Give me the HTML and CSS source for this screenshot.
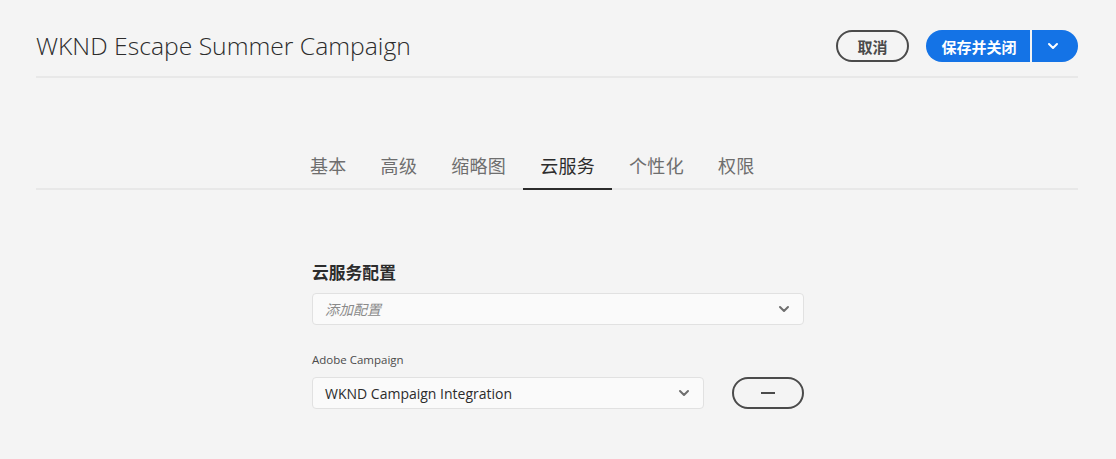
FILE: index.html
```html
<!DOCTYPE html>
<html lang="zh">
<head>
<meta charset="utf-8">
<title>WKND Escape Summer Campaign</title>
<link rel="stylesheet" href="styles.css">
</head>
<body>
<div class="page">
  <header class="header">
    <h1 class="title">WKND Escape Summer Campaign</h1>
    <div class="actions">
      <button class="btn-cancel">取消</button>
      <div class="split">
        <button class="btn-save">保存并关闭</button>
        <button class="btn-more" aria-label="更多">
          <svg width="12" height="8" viewBox="0 0 12 8"><path d="M2 2 L6 6 L10 2" fill="none" stroke="#fff" stroke-width="2" stroke-linecap="round" stroke-linejoin="round"/></svg>
        </button>
      </div>
    </div>
  </header>

  <nav class="tabs">
    <div class="tab">基本</div>
    <div class="tab">高级</div>
    <div class="tab">缩略图</div>
    <div class="tab active">云服务</div>
    <div class="tab">个性化</div>
    <div class="tab">权限</div>
  </nav>

  <section class="form">
    <h2 class="section-title">云服务配置</h2>
    <div class="select placeholder">
      <span>添加配置</span>
      <svg class="chev" width="12" height="8" viewBox="0 0 12 8"><path d="M2 2 L6 6 L10 2" fill="none" stroke="#6e6e6e" stroke-width="2" stroke-linecap="round" stroke-linejoin="round"/></svg>
    </div>
    <div class="field-label">Adobe Campaign</div>
    <div class="row">
      <div class="select short">
        <span>WKND Campaign Integration</span>
        <svg class="chev" width="12" height="8" viewBox="0 0 12 8"><path d="M2 2 L6 6 L10 2" fill="none" stroke="#6e6e6e" stroke-width="2" stroke-linecap="round" stroke-linejoin="round"/></svg>
      </div>
      <button class="btn-remove" aria-label="删除">
        <svg width="14" height="2" viewBox="0 0 14 2"><rect width="14" height="2" fill="#4b4b4b"/></svg>
      </button>
    </div>
  </section>
</div>
</body>
</html>
```

FILE: styles.css
```css
* { box-sizing: border-box; }
html, body { margin: 0; padding: 0; }
body {
  background: #f4f4f4;
  font-family: "Open Sans", "Noto Sans CJK SC", sans-serif;
  color: #2c2c2c;
}
.page {
  padding: 0 38px 0 36px;
}
.header {
  display: flex;
  align-items: center;
  justify-content: space-between;
  padding: 30px 0 14px;
  border-bottom: 2px solid #e8e8e8;
}
.title {
  margin: 0;
  font-weight: 300;
  font-size: 24.7px;
  line-height: 32px;
  color: #2c2c2c;
}
.actions {
  display: flex;
  gap: 17px;
}
button {
  font-family: "Noto Sans CJK SC", sans-serif;
  cursor: pointer;
}
.btn-cancel {
  width: 73px;
  height: 32px;
  border: 2px solid #4b4b4b;
  border-radius: 16px;
  background: transparent;
  color: #4b4b4b;
  font-size: 15px;
  font-weight: 700;
  padding: 0;
}
.split {
  display: flex;
  gap: 2px;
}
.btn-save {
  width: 104px;
  height: 32px;
  border: none;
  border-radius: 16px 0 0 16px;
  background: #1473e6;
  color: #fff;
  font-size: 15px;
  font-weight: 700;
  padding: 0 0 0 2px;
}
.btn-more {
  width: 46px;
  height: 32px;
  border: none;
  border-radius: 0 16px 16px 0;
  background: #1473e6;
  display: flex;
  align-items: center;
  justify-content: center;
  padding: 0 4px 0 0;
}
.tabs {
  margin-top: 64px;
  display: flex;
  padding-left: 257px;
  border-bottom: 2px solid #e8e8e8;
}
.tab {
  position: relative;
  height: 46px;
  line-height: 46px;
  padding: 0 17px;
  font-family: "Noto Sans CJK SC", sans-serif;
  font-size: 18px;
  letter-spacing: 0.3px;
  color: #6e6e6e;
}
.tab.active { color: #2c2c2c; }
.tab.active::after {
  content: "";
  position: absolute;
  left: 0; right: 0; bottom: -2px;
  height: 2px;
  background: #2c2c2c;
}
.form {
  width: 492px;
  margin: 70px 0 0 276px;
}
.section-title {
  margin: 0;
  font-family: "Noto Sans CJK SC", sans-serif;
  font-size: 16.8px;
  font-weight: 700;
  line-height: 24px;
  color: #2c2c2c;
}
.select {
  margin-top: 9px;
  height: 32px;
  border: 1px solid #e1e1e1;
  border-radius: 4px;
  background: #fafafa;
  display: flex;
  align-items: center;
  justify-content: space-between;
  padding: 0 12px;
  font-size: 14px;
  color: #2c2c2c;
}
.select .chev { margin-right: 1px; }
.select.placeholder span {
  font-style: italic;
  color: #8a8a8a;
  font-family: "Noto Sans CJK SC", sans-serif;
  font-size: 14px;
}
.field-label {
  margin-top: 27px;
  font-size: 11.5px;
  line-height: 16px;
  color: #4b4b4b;
}
.row {
  display: flex;
  align-items: center;
  gap: 28px;
  margin-top: 9px;
}
.row .select { margin-top: 0; }
.select.short { width: 393px; }
.btn-remove {
  width: 72px;
  height: 32px;
  border: 2px solid #4b4b4b;
  border-radius: 16px;
  background: transparent;
  display: flex;
  align-items: center;
  justify-content: center;
  padding: 0;
}
```
